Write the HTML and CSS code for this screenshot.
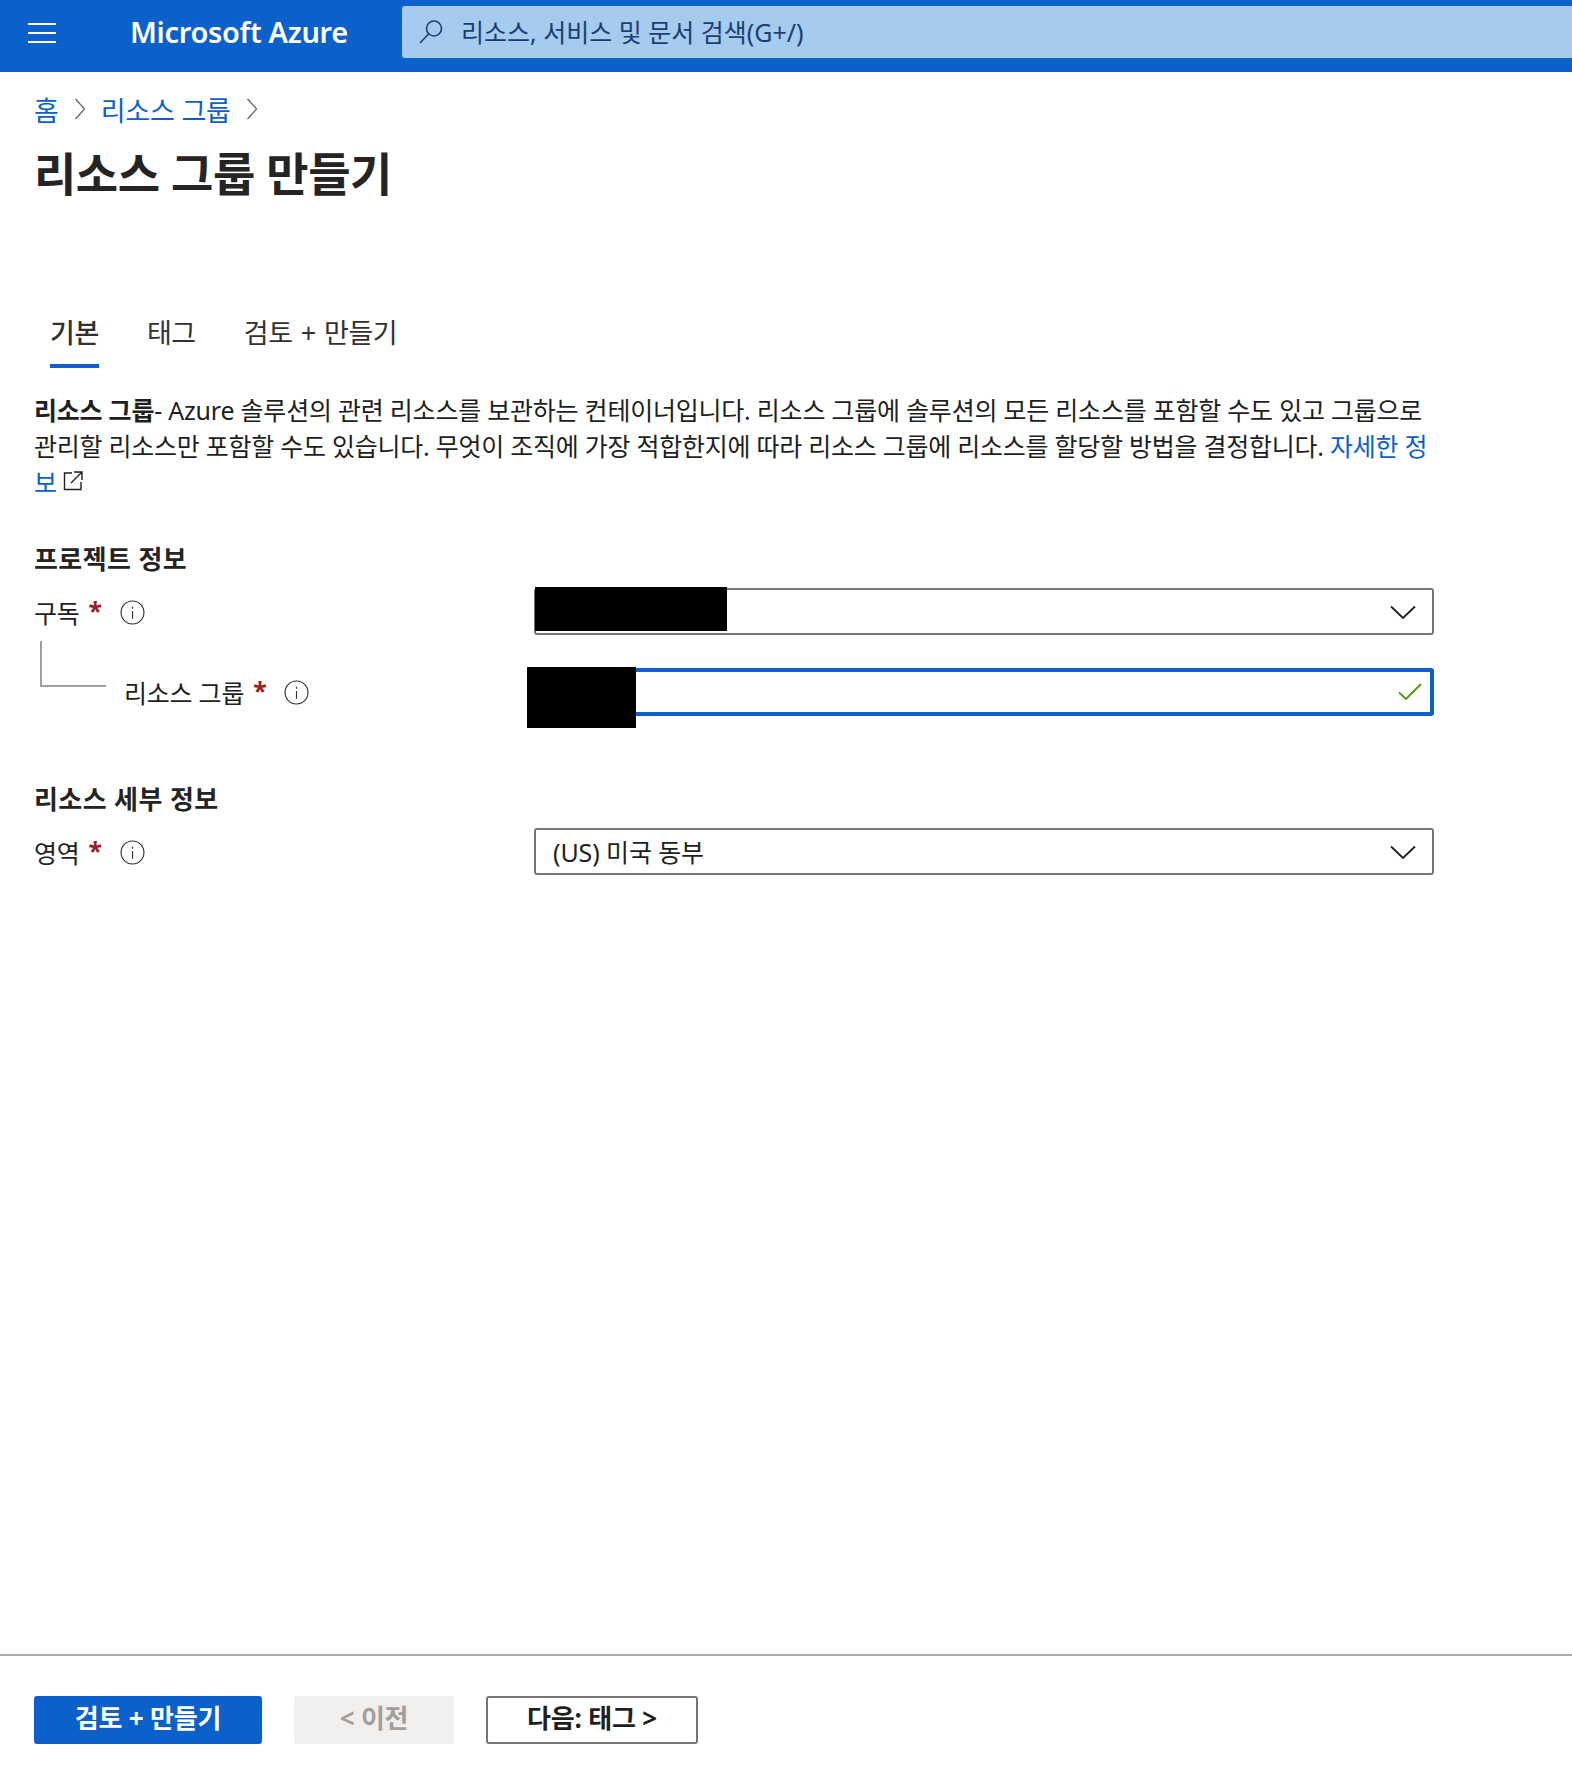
FILE: index.html
```html
<!DOCTYPE html>
<html lang="ko">
<head>
<meta charset="utf-8">
<title>리소스 그룹 만들기 - Microsoft Azure</title>
<link rel="stylesheet" href="styles.css">
</head>
<body>
<div class="page">
  <header class="topbar">
    <div class="menu" aria-label="메뉴"><span></span><span></span><span></span></div>
    <div class="brand">Microsoft Azure</div>
    <div class="search">
      <svg class="search-icon" width="28" height="28" viewBox="0 0 28 28" fill="none" stroke="#1c3f72" stroke-width="1.6"><circle cx="17" cy="10.5" r="7.5"/><path d="M11.5 16 L3 25"/></svg>
      <span class="search-text">리소스, 서비스 및 문서 검색(G+/)</span>
    </div>
  </header>
  <main class="content">
    <nav class="crumbs">
      <a>홈</a>
      <svg class="crumb-sep" width="12" height="24" viewBox="0 0 12 24" fill="none" stroke="#605e5c" stroke-width="1.2"><path d="M1.5 2 L10.5 12 L1.5 22"/></svg>
      <a>리소스 그룹</a>
      <svg class="crumb-sep" width="12" height="24" viewBox="0 0 12 24" fill="none" stroke="#605e5c" stroke-width="1.2"><path d="M1.5 2 L10.5 12 L1.5 22"/></svg>
    </nav>
    <h1 class="title">리소스 그룹 만들기</h1>
    <div class="tabs">
      <div class="tab active">기본</div>
      <div class="tab">태그</div>
      <div class="tab">검토 + 만들기</div>
    </div>
    <p class="intro"><strong>리소스 그룹</strong>- Azure 솔루션의 관련 리소스를 보관하는 컨테이너입니다. 리소스 그룹에 솔루션의 모든 리소스를 포함할 수도 있고 그룹으로<br><span class="tight">관리할 리소스만 포함할 수도 있습니다. 무엇이 조직에 가장 적합한지에 따라 리소스 그룹에 리소스를 할당할 방법을 결정합니다. <a class="link">자세한 정</a></span><br><a class="link">보</a> <svg class="ext" width="20" height="20" viewBox="0 0 20 20" fill="none" stroke="#201f1e" stroke-width="1.4"><path d="M9 2H1.5V18.5H18V11M11 1H19V9M19 1L8 12"/></svg></p>

    <h2 class="section section-project">프로젝트 정보</h2>
    <div class="row row-sub">
      <div class="label"><span>구독</span><i class="req">*</i>
        <svg class="info" width="25" height="25" viewBox="0 0 24 24" fill="none" stroke="#323130" stroke-width="1.1"><circle cx="12" cy="12" r="11"/><path d="M12 10.5V18M12 6.5V8.5"/></svg></div>
      <div class="field select">
        <svg class="chev" width="26" height="15" viewBox="0 0 26 15" fill="none" stroke="#201f1e" stroke-width="1.8"><path d="M1 1.5 L13 13 L25 1.5"/></svg>
        <div class="redact redact-a"></div>
      </div>
    </div>
    <div class="row row-group">
      <div class="label label-nested"><span class="tree"></span><span>리소스 그룹</span><i class="req">*</i>
        <svg class="info" width="25" height="25" viewBox="0 0 24 24" fill="none" stroke="#323130" stroke-width="1.1"><circle cx="12" cy="12" r="11"/><path d="M12 10.5V18M12 6.5V8.5"/></svg></div>
      <div class="field focus">
        <svg class="check" width="24" height="18" viewBox="0 0 24 18" fill="none" stroke="#4a9a0c" stroke-width="1.8"><path d="M1 9.5 L8 16 L23 1"/></svg>
        <div class="redact redact-b"></div>
      </div>
    </div>

    <h2 class="section section-detail">리소스 세부 정보</h2>
    <div class="row row-region">
      <div class="label"><span>영역</span><i class="req">*</i>
        <svg class="info" width="25" height="25" viewBox="0 0 24 24" fill="none" stroke="#323130" stroke-width="1.1"><circle cx="12" cy="12" r="11"/><path d="M12 10.5V18M12 6.5V8.5"/></svg></div>
      <div class="field select">
        <span class="value">(US) 미국 동부</span>
        <svg class="chev" width="26" height="15" viewBox="0 0 26 15" fill="none" stroke="#201f1e" stroke-width="1.8"><path d="M1 1.5 L13 13 L25 1.5"/></svg>
      </div>
    </div>
  </main>
  <footer class="footer">
    <button class="btn btn-primary">검토 + 만들기</button>
    <button class="btn btn-disabled">&lt; 이전</button>
    <button class="btn btn-outline">다음: 태그 &gt;</button>
  </footer>
</div>
</body>
</html>
```
FILE: styles.css
```css
* { box-sizing: border-box; }
html, body { margin: 0; padding: 0; background: #fff; }
body {
  font-family: "Noto Sans", "Noto Sans CJK KR", sans-serif;
  font-size: 25px;
  letter-spacing: -0.22px;
  color: #201f1e;
}
.page { min-height: 1784px; display: flex; flex-direction: column; }

.topbar {
  height: 72px;
  background: #0b60ca;
  display: flex;
  align-items: flex-start;
  padding-top: 6px;
  flex: none;
}
.menu {
  width: 28px;
  margin: 17px 0 0 28px;
  display: flex;
  flex-direction: column;
  gap: 7px;
}
.menu span { display: block; height: 2px; background: #fff; }
.brand {
  width: 272px;
  margin-left: 74px;
  color: #fff;
  font-family: "Noto Sans", sans-serif;
  font-size: 29px;
  font-weight: 600;
  line-height: 52px;
  letter-spacing: -0.33px;
}
.search {
  flex: 1;
  height: 52px;
  background: #a5cbef;
  border-radius: 3px 0 0 3px;
  display: flex;
  align-items: center;
  padding-left: 15px;
  color: #1c3f72;
}
.search-icon { flex: none; }
.search-text { margin-left: 16px; position: relative; top: -1px; letter-spacing: 0; }

.content { flex: 1; padding: 0 138px 0 34px; }
.crumbs { display: flex; align-items: center; height: 36px; margin-top: 19px; }
.crumbs a { color: #0b60ca; font-size: 27px; letter-spacing: -0.2px; }
.crumb-sep { margin: 0 15px 0 15px; }
.title { margin: 15px 0 0; font-size: 46px; font-weight: 700; line-height: 62px; letter-spacing: -0.45px; color: #252423; }

.tabs { display: flex; gap: 48px; margin: 110px 0 0 16px; }
.tab { height: 54px; line-height: 38px; font-size: 27px; letter-spacing: -0.4px; word-spacing: 1.5px; color: #323130; border-bottom: 4px solid transparent; }
.tab.active { font-weight: 500; border-bottom-color: #0b60ca; }

.intro { margin: 24px 0 0; line-height: 36px; white-space: nowrap; }
.intro strong { font-weight: 700; }
.tight { letter-spacing: -0.25px; }
.link { color: #0b60ca; }
.ext { vertical-align: 1px; margin-left: 0; }

.section { margin: 0; font-size: 26px; font-weight: 700; line-height: 36px; letter-spacing: 0.4px; color: #252423; }
.section-project { margin-top: 41px; }
.section-detail { margin-top: 66px; }

.row { display: flex; align-items: center; height: 47px; }
.row-sub { margin-top: 11px; }
.row-group { margin-top: 33px; }
.row-region { margin-top: 11px; }
.label { width: 500px; flex: none; display: flex; align-items: center; position: relative; }
.label-nested { padding-left: 90px; }
.tree {
  position: absolute;
  left: 6px;
  top: -33px;
  width: 66px;
  height: 46px;
  border-left: 2px solid #a19f9d;
  border-bottom: 2px solid #a19f9d;
}
.req { font-style: normal; color: #9b1c22; margin-left: 9px; font-weight: 700; line-height: 1; position: relative; top: -1px; }
.info { margin: 2px 0 0 18px; flex: none; }
.label-nested .info { margin-left: 17px; }

.field {
  width: 900px;
  height: 47px;
  flex: none;
  border: 2px solid #7a7574;
  border-radius: 3px;
  display: flex;
  align-items: center;
  justify-content: flex-end;
  padding-right: 16px;
  position: relative;
}
.chev { margin-top: 2px; }
.field.focus { border: 4px solid #0b60ca; height: 48px; padding-right: 8px; }
.value { margin-right: auto; padding-left: 17px; position: relative; top: -1px; letter-spacing: -0.1px; }
.redact { position: absolute; background: #000; }
.redact-a { left: -1px; top: -3px; width: 192px; height: 44px; }
.redact-b { left: -11px; top: -5px; width: 109px; height: 61px; }

.footer {
  flex: none;
  border-top: 2px solid #adadad;
  height: 130px;
  padding: 40px 0 0 34px;
  display: flex;
  align-items: flex-start;
}
.btn {
  height: 48px;
  font-family: inherit;
  font-size: 26px;
  font-weight: 700;
  letter-spacing: -0.2px;
  line-height: 36px;
  border-radius: 3px;
  padding: 0 0 5px;
  border: 2px solid transparent;
}
.btn-primary { width: 228px; background: #0b60ca; color: #fff; }
.btn-disabled { width: 160px; margin-left: 32px; background: #f0efee; color: #a19f9d; }
.btn-outline { width: 212px; margin-left: 32px; background: #fff; border-color: #7a7574; color: #201f1e; }
```
